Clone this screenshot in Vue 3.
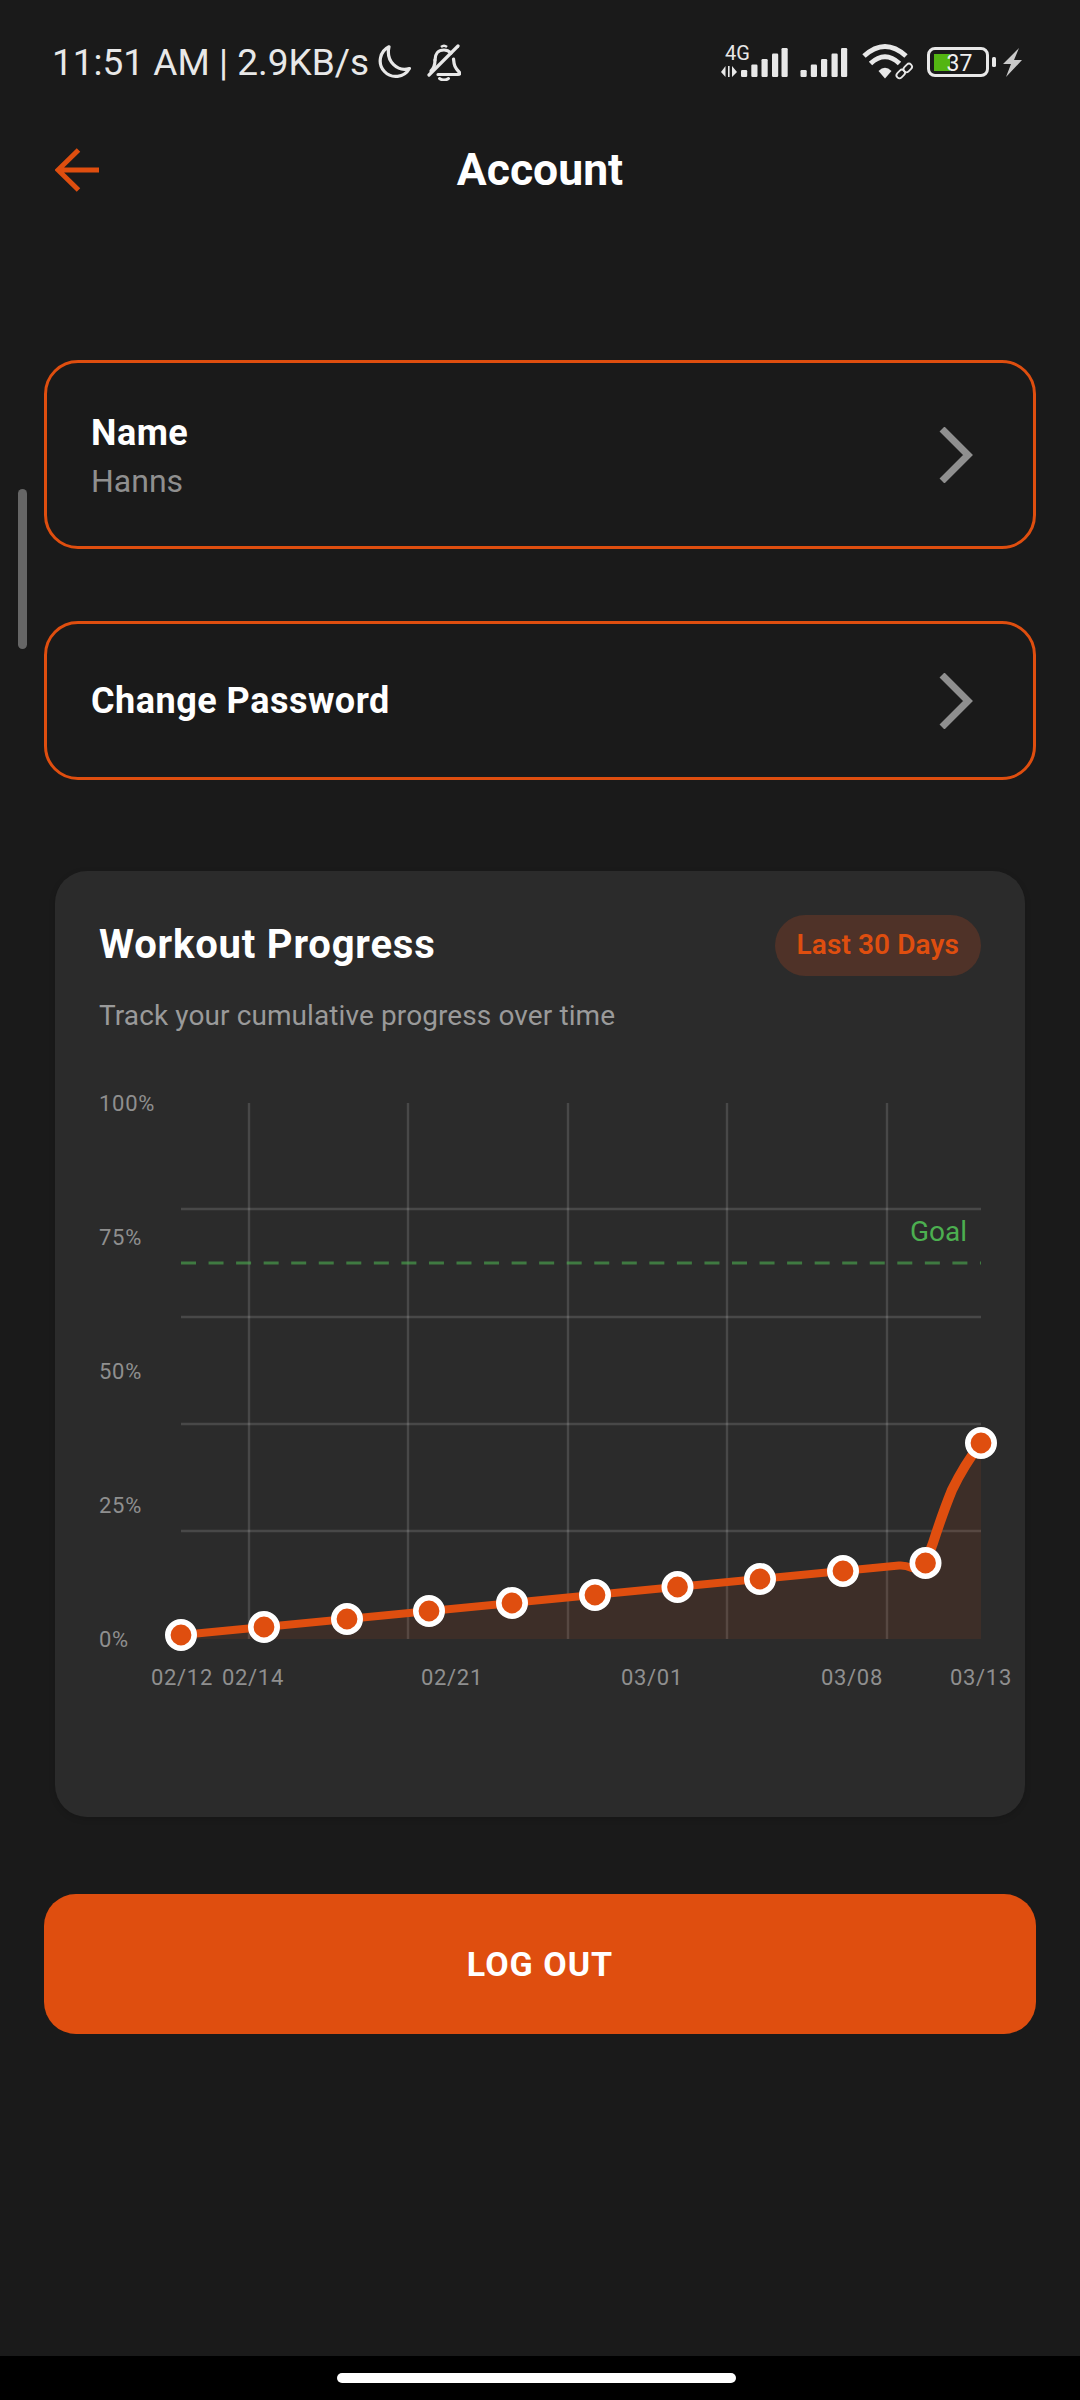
<script setup>
const hLines = [1209, 1317, 1424, 1531]
const vLines = [249, 408, 568, 727, 887]
const yLabels = [
  { t: '100%', y: 1103 }, { t: '75%', y: 1237 }, { t: '50%', y: 1371 }, { t: '25%', y: 1505 }, { t: '0%', y: 1639 }
]
const xLabels = [
  { t: '02/12', x: 182 }, { t: '02/14', x: 253 }, { t: '02/21', x: 452 },
  { t: '03/01', x: 652 }, { t: '03/08', x: 852 }, { t: '03/13', x: 981 }
]
const dots = [
  [181, 1635], [264, 1627], [347, 1619], [429, 1611], [512, 1603], [595, 1595],
  [677.5, 1587], [760, 1579], [843, 1571], [925.5, 1563], [981, 1443]
]
const flatPath = 'M181 1635 L899 1565.5 Q905 1565 912 1568 L925.5 1563'
const steepPath = 'M925.5 1563 L933 1543 Q943 1512 952 1490 Q964 1465 981 1443'
const areaPath = flatPath + ' L933 1543 Q943 1512 952 1490 Q964 1465 981 1443 L981 1639 L181 1639 Z'
const bars = [
  { x: 0, h: 7 }, { x: 10.3, h: 12.5 }, { x: 20.5, h: 18 }, { x: 31, h: 23.5 }, { x: 40.5, h: 29 }
]
</script>

<template>
  <div class="page">
    <div class="scrollbar"></div>
    <div class="status">
      <div class="status-left">
        <span class="clock">11:51 AM | 2.9KB/s</span>
        <svg class="moon" viewBox="0 0 34 34" width="34" height="34">
          <path d="M12 1.8 A15.6 15.6 0 1 0 32.4 23.5 C21 27 8.5 17 12 1.8 Z" fill="none" stroke="#e8e8e8" stroke-width="3.2" stroke-linejoin="round" />
        </svg>
        <svg class="bell" viewBox="0 0 34 37" width="34" height="37">
          <path d="M8 16 C8 10 11 6 17 6 C20 6 22 7 24 9 M26.5 15 C27 21 28 24 32.5 28.5 Q33.5 30.5 31 30.5 L11 30.5" fill="none" stroke="#e8e8e8" stroke-width="3.2" stroke-linecap="round" stroke-linejoin="round" />
          <path d="M8 16 C8 21 7 24 4 27" fill="none" stroke="#e8e8e8" stroke-width="3.2" stroke-linecap="round" />
          <path d="M31 2 L2 31" stroke="#e8e8e8" stroke-width="3.2" stroke-linecap="round" />
          <path d="M14 3 Q17 0.5 20 3" fill="none" stroke="#e8e8e8" stroke-width="2.5" />
          <path d="M12.5 34.5 Q17 37.5 21.5 34.5" fill="none" stroke="#e8e8e8" stroke-width="3" stroke-linecap="round" />
        </svg>
      </div>
      <svg class="status-right" viewBox="720 40 304 40" width="304" height="40">
        <text x="725" y="57.5" class="net">4G</text>
        <path d="M725.5 64 V75 L721 70 Z M732 64 V75 L737 70 Z M728 64 h1.6 V75 h-1.6 Z" fill="#e8e8e8" />
        <g transform="translate(741 75)">
          <rect v-for="b in bars" :key="b.x" :x="b.x" :y="-b.h" width="6.2" :height="b.h" rx="1.2" fill="#e8e8e8" />
        </g>
        <g transform="translate(800.5 75)">
          <rect v-for="b in bars" :key="b.x" :x="b.x" :y="-b.h" width="6.2" :height="b.h" rx="1.2" fill="#e8e8e8" />
        </g>
        <g fill="none" stroke="#e8e8e8" stroke-width="5">
          <path d="M864 54 Q885 35 906 54" />
          <path d="M870.5 61.5 Q885 48 899.5 61.5" />
        </g>
        <path d="M878.5 69 Q885 62.5 891.5 69 L885 76.5 Z" fill="#e8e8e8" />
        <g fill="none" stroke="#e8e8e8" stroke-width="1.8">
          <rect x="896" y="69" width="9.5" height="6" rx="3" transform="rotate(-45 900.7 72)" />
          <rect x="903" y="63" width="9.5" height="6" rx="3" transform="rotate(-45 907.7 66)" />
        </g>
        <rect x="928.5" y="46.5" width="59" height="27" rx="6.5" fill="none" stroke="#e8e8e8" stroke-width="3" />
        <path d="M934 52 H950 V69 H934 Z" fill="#53b512" />
        <text x="946.5" y="68.5" class="batt">37</text>
        <rect x="992" y="55" width="4" height="10" rx="1.5" fill="#e8e8e8" />
        <path d="M1019 46 L1003 62 H1011 L1006 75 L1022 58 H1014 Z" fill="#c9c9c9" />
      </svg>
    </div>

    <header class="bar">
      <svg class="back" viewBox="0 0 44 44" width="44" height="44">
        <path d="M44 22 H3 M23.5 2 L3 22 L23.5 42" fill="none" stroke="#df4e0f" stroke-width="5" />
      </svg>
      <h1 class="title">Account</h1>
      <span></span>
    </header>

    <main class="content">
      <section class="row row-name">
        <div class="row-text">
          <div class="row-label">Name</div>
          <div class="row-value">Hanns</div>
        </div>
        <svg class="chev" viewBox="0 0 34 56" width="34" height="56">
          <path d="M3 2 L29 28 L3 54" fill="none" stroke="#8f8f8f" stroke-width="7" />
        </svg>
      </section>

      <section class="row row-pass">
        <div class="row-label">Change Password</div>
        <svg class="chev" viewBox="0 0 34 56" width="34" height="56">
          <path d="M3 2 L29 28 L3 54" fill="none" stroke="#8f8f8f" stroke-width="7" />
        </svg>
      </section>

      <section class="chart-card">
        <div class="chart-head">
          <h2 class="chart-title">Workout Progress</h2>
          <span class="pill">Last 30 Days</span>
        </div>
        <p class="chart-sub">Track your cumulative progress over time</p>
        <svg class="chart" viewBox="55 1090 970 620" width="970" height="620">
          <line v-for="y in hLines" :key="'h' + y" x1="181" x2="981" :y1="y" :y2="y" class="grid" />
          <line v-for="x in vLines" :key="'v' + x" :x1="x" :x2="x" y1="1103" y2="1639" class="grid" />
          <path :d="areaPath" fill="#df4e0f" fill-opacity="0.1" />
          <line x1="181" x2="981" y1="1263" y2="1263" class="goal-line" />
          <text x="967" y="1241" text-anchor="end" class="goal">Goal</text>
          <text v-for="l in yLabels" :key="l.t" x="99" :y="l.y + 8" class="axis">{{ l.t }}</text>
          <text v-for="l in xLabels" :key="l.t" :x="l.x" y="1685" text-anchor="middle" class="axis">{{ l.t }}</text>
          <path :d="flatPath" fill="none" stroke="#df4e0f" stroke-width="8" stroke-linejoin="round" />
          <path :d="steepPath" fill="none" stroke="#df4e0f" stroke-width="10" stroke-linejoin="round" />
          <circle v-for="d in dots" :key="d[0]" :cx="d[0]" :cy="d[1]" r="13.2" fill="#df4e0f" stroke="#fff" stroke-width="5.6" />
        </svg>
      </section>

      <button class="logout">LOG OUT</button>
    </main>

    <div class="spacer"></div>
    <footer class="nav"><div class="home"></div></footer>
  </div>
</template>

<style scoped>
.page {
  position: relative;
  width: 1080px;
  height: 2400px;
  display: flex;
  flex-direction: column;
  background: #1a1a1a;
  font-family: Roboto, sans-serif;
  color: #fff;
  overflow: hidden;
}
.scrollbar {
  position: absolute;
  left: 18px;
  top: 489px;
  width: 9px;
  height: 160px;
  border-radius: 5px;
  background: #666;
}
.status {
  height: 124px;
  flex: none;
  display: flex;
  align-items: center;
  justify-content: space-between;
  padding: 0 56px 0 52px;
  box-sizing: border-box;
}
.status-left {
  display: flex;
  align-items: center;
}
.clock {
  font-size: 37px;
  color: #e8e8e8;
  white-space: nowrap;
}
.moon { margin-left: 8px; }
.bell { margin-left: 16px; }
.net { font: 20px Roboto, sans-serif; fill: #e8e8e8; }
.batt { font: 23px Roboto, sans-serif; fill: #f0f0f0; }
.bar {
  height: 92px;
  flex: none;
  display: grid;
  grid-template-columns: 1fr auto 1fr;
  align-items: center;
  padding: 0 55px;
  box-sizing: border-box;
}
.title {
  margin: 0;
  font-size: 44.5px;
  font-weight: 700;
  line-height: 1;
}
.content {
  padding: 144px 44px 0;
  display: flex;
  flex-direction: column;
}
.row {
  box-sizing: border-box;
  display: flex;
  align-items: center;
  justify-content: space-between;
  border: 3px solid #df4e0f;
  border-radius: 34px;
  padding: 0 60px 0 44px;
}
.row-name { height: 189px; }
.row-pass { height: 159px; margin-top: 72px; }
.row-text { padding-top: 2px; }
.row-label {
  font-size: 36px;
  font-weight: 700;
  line-height: 44px;
  letter-spacing: 0.5px;
}
.row-value {
  font-size: 32px;
  line-height: 40px;
  color: #8f8f8f;
  margin-top: 6px;
}
.chart-card {
  box-sizing: border-box;
  margin: 91px 11px 0;
  height: 946px;
  border-radius: 32px;
  background: #2b2b2b;
  box-shadow: 0 2px 6px rgba(0, 0, 0, 0.15);
}
.chart-head {
  display: flex;
  align-items: center;
  justify-content: space-between;
  padding: 44px 44px 0;
  height: 61px;
}
.chart-title {
  margin: -2px 0 0;
  font-size: 40px;
  font-weight: 700;
  line-height: 1;
  letter-spacing: 0.8px;
}
.pill {
  height: 61px;
  line-height: 59px;
  padding: 0 22px;
  border-radius: 31px;
  background: #4f3228;
  color: #df4e0f;
  font-size: 28px;
  font-weight: 600;
  letter-spacing: 0.1px;
}
.chart-sub {
  margin: 20px 44px 0;
  font-size: 28px;
  line-height: 40px;
  letter-spacing: 0.1px;
  color: #9a9a9a;
}
.chart {
  display: block;
  margin-top: 54px;
  overflow: visible;
}
.grid { stroke: #fff; stroke-opacity: 0.14; stroke-width: 2.4; }
.goal-line { stroke: #4caf50; stroke-opacity: 0.6; stroke-width: 3; stroke-dasharray: 15 12.55; }
.goal { font: 28px Roboto, sans-serif; fill: #4caf50; }
.axis { font: 22px Roboto, sans-serif; fill: #8f8f8f; letter-spacing: 0.7px; }
.logout {
  margin-top: 77px;
  height: 140px;
  border: none;
  border-radius: 32px;
  background: #df4e0f;
  color: #fff;
  font-family: Roboto, sans-serif;
  font-size: 34px;
  font-weight: 700;
  letter-spacing: 1px;
}
.spacer { flex: 1; }
.nav {
  height: 44px;
  flex: none;
  background: #000;
}
.home {
  width: 399px;
  height: 10px;
  margin: 17px 0 0 337px;
  border-radius: 5px;
  background: #fff;
}
</style>
